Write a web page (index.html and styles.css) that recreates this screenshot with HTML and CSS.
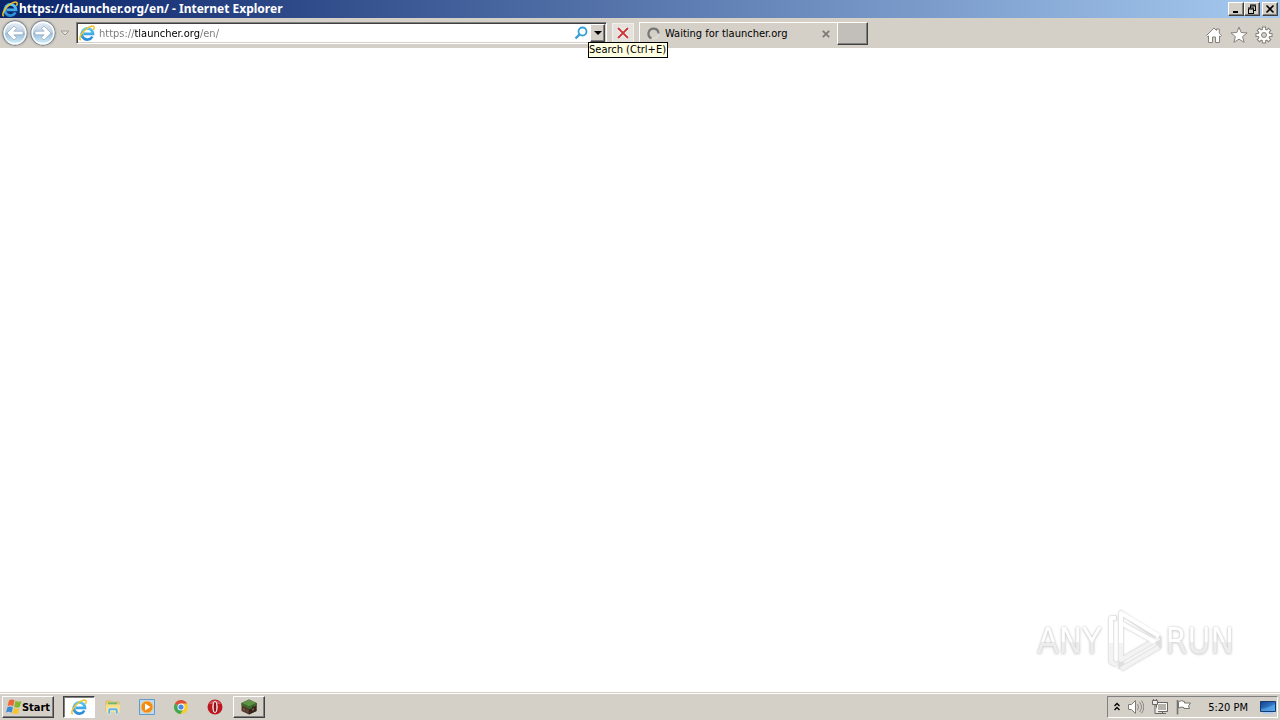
FILE: index.html
```html
<!DOCTYPE html>
<html lang="en">
<head>
<meta charset="utf-8">
<title>https://tlauncher.org/en/ - Internet Explorer</title>
<link rel="stylesheet" href="styles.css">
</head>
<body>
<svg class="defs" aria-hidden="true">
  <defs>
    <linearGradient id="blue" x1="0" y1="0" x2="0" y2="1"><stop offset="0" stop-color="#59c8f5"/><stop offset="1" stop-color="#2a8bd6"/></linearGradient>
    <linearGradient id="orb" x1="0" y1="0" x2="0" y2="1"><stop offset="0" stop-color="#eef3f8"/><stop offset=".48" stop-color="#bccfe2"/><stop offset=".52" stop-color="#9dbcd8"/><stop offset="1" stop-color="#d8f8ff"/></linearGradient>
    <linearGradient id="screen" x1="0" y1="0" x2="1" y2="1"><stop offset="0" stop-color="#123f8c"/><stop offset="1" stop-color="#4aa3ef"/></linearGradient>
    <symbol id="ie" viewBox="0 0 16 16">
      <path d="M13.400 11.500A5.600 5.600 0 1 1 14 8.900H4.500" fill="none" stroke="url(#blue)" stroke-width="2.700"/>
      <path d="M1.800 15.200C-.8 13.500 2.600 7.300 7.600 3.700c3.200-2.500 6.900-3.600 7.500-1.700.3.900-.1 1.900-.7 2.900" fill="none" stroke="#f3c322" stroke-width="1.500"/>
    </symbol>
    <symbol id="arrow" viewBox="0 0 26 26">
      <circle cx="13" cy="13" r="12.200" fill="url(#orb)" stroke="#8b8f96" stroke-width="1.400"/>
      <circle cx="13" cy="13" r="10.800" fill="none" stroke="#fff" stroke-opacity=".9" stroke-width="1.400"/>
      <path d="M5 13l7-7 2.500 2.500-2.700 2.700H21v3.600h-9.200l2.700 2.700L12 20z" fill="#fff" stroke="#8fa9c2" stroke-width=".7"/>
    </symbol>
  </defs>
</svg>

<header class="titlebar">
  <svg class="icon16"><use href="#ie"/></svg>
  <h1 class="title">https://tlauncher.org/en/ - Internet Explorer</h1>
  <div class="window-buttons">
    <button class="win" aria-label="Minimize"><svg viewBox="0 0 10 10"><path d="M2 8h5" stroke="#000" stroke-width="2"/></svg></button>
    <button class="win" aria-label="Restore"><svg viewBox="0 0 10 10"><path d="M3 1h6M3 2h6M3.500 2v2M8.500 2v4M7 6.500h2M1 4h6M1 5h6M1.500 5v4M6.500 5v4M1 9.500h6" stroke="#000" fill="none"/></svg></button>
    <button class="win close" aria-label="Close"><svg viewBox="0 0 10 10"><path d="M1.500 1.500l7 7M8.500 1.500l-7 7" stroke="#000" stroke-width="1.600"/></svg></button>
  </div>
</header>

<nav class="toolbar" aria-label="Browser">
  <div class="history">
    <button class="plain orb" aria-label="Back"><svg><use href="#arrow"/></svg></button>
    <button class="plain orb forward" aria-label="Forward"><svg><use href="#arrow"/></svg></button>
    <button class="plain recent" aria-label="Recent pages"><svg viewBox="0 0 10 6"><path d="M1 1h8L5 5z" fill="#e6e3dd" stroke="#a09c94"/></svg></button>
  </div>
  <form class="address">
    <svg class="icon16"><use href="#ie"/></svg>
    <input class="url" type="text" aria-label="Address" value="https://tlauncher.org/en/" spellcheck="false">
    <button type="button" class="plain search" aria-label="Search"><svg viewBox="0 0 14 14"><circle cx="8.500" cy="5.500" r="4" fill="#fff" stroke="#35a0d8" stroke-width="1.800"/><path d="M5.500 8.500L1.500 12.500" stroke="#35a0d8" stroke-width="2.400"/></svg></button>
    <button type="button" class="drop" aria-label="Show address list"><svg viewBox="0 0 8 4"><path d="M0 0h8L4 4z"/></svg></button>
    <div class="tooltip" role="tooltip">Search (Ctrl+E)</div>
  </form>
  <button class="stop" aria-label="Stop"><svg viewBox="0 0 12 12"><path d="M1 1l10 10M11 1L1 11" stroke="#fff" stroke-width="3.400"/><path d="M1 1l10 10M11 1L1 11" stroke="#c9383b" stroke-width="2"/></svg></button>
  <div class="tab">
    <svg class="spinner" viewBox="0 0 14 14"><circle cx="6.500" cy="6.500" r="5" fill="none" stroke="#dedbd5" stroke-width="2"/><path d="M4.500 11.200A5 5 0 1 1 11.500 6.500" fill="none" stroke="#777" stroke-width="2.200"/></svg>
    <span class="tab-title">Waiting for tlauncher.org</span>
    <button class="plain tab-close" aria-label="Close tab"><svg viewBox="0 0 8 8"><path d="M.8.800l6.400 6.400M7.200.8L.8 7.200" stroke="#7c7973" stroke-width="1.700"/></svg></button>
  </div>
  <button class="new-tab" aria-label="New tab"></button>
  <div class="tools">
    <button class="plain" aria-label="Home"><svg viewBox="0 0 18 18"><path d="M1.500 9.500L9 2l2.500 2.500V3h2.800v4.200l2.200 2.300-1.200 1.200-.8-.7v6.500h-4V11H7.500v5.500h-4V10l-.8.700z" fill="#fff" stroke="#85827c"/></svg></button>
    <button class="plain" aria-label="Favorites"><svg viewBox="0 0 18 18"><path d="M9 1.200l2.200 5.300 5.900.4-4.500 3.700 1.500 5.700L9 13.200l-5.100 3.100 1.500-5.700L.9 6.900l5.900-.4z" fill="#fff" stroke="#85827c"/></svg></button>
    <button class="plain" aria-label="Tools"><svg viewBox="0 0 18 18"><g stroke="#85827c" stroke-width="4.200"><path d="M9 .5v17M.5 9h17M3 3l12 12M15 3L3 15"/></g><circle cx="9" cy="9" r="6.400" fill="#85827c"/><g stroke="#fff" stroke-width="2.200"><path d="M9 1.500v15M1.500 9h15M3.700 3.700l10.600 10.600M14.300 3.700L3.700 14.300"/></g><circle cx="9" cy="9" r="5.400" fill="#fff"/><circle cx="9" cy="9" r="2.500" fill="#d4d0c8" stroke="#85827c"/></svg></button>
  </div>
</nav>

<main class="page">
  <div class="watermark">
    <span class="mark-text">ANY</span>
    <svg class="mark-logo" viewBox="0 0 60 64" fill="none" stroke-linejoin="round">
      <g stroke="#dedede" stroke-width="5"><path d="M13 9H7v44l6 3"/><path d="M17 4v47l38-22z"/><path d="M17 14l29 16M17 60l38-22v-8M17 51v9"/></g>
      <g stroke="#f3f3f3" stroke-width="4"><path d="M7 34v19l6 3M17 33v18l38-22M17 60l38-22"/></g>
      <g stroke="#fff" stroke-width="4"><path d="M12 9H7v25"/><path d="M17 34V4l38 23"/><path d="M17 14l34 19"/></g>
    </svg>
    <span class="mark-text">RUN</span>
  </div>
</main>

<footer class="taskbar">
  <button class="start"><svg class="icon16" viewBox="0 0 16 16"><path d="M3 1.500q3-2 5.500-.2L7.200 7.300Q4.500 5.600 1.600 7z" fill="#ed6435"/><path d="M9.500 1.800q2.500 1.700 6 .5l-1.900 5.800q-2.700 1.200-5.400-.4z" fill="#81b82b"/><path d="M1.400 8.200q2.900-1.300 5.500.3l-1.300 5.300Q3 12.100 0 13.500z" fill="#3b8bd4"/><path d="M7.900 8.900q2.700 1.600 5.400.4L12 14.500q-2.800 1.300-5.400-.3z" fill="#f7c42e"/></svg><span class="start-label">Start</span></button>
  <div class="tasks">
    <button class="task active" aria-label="Internet Explorer"><svg viewBox="0 0 16 16"><use href="#ie"/></svg></button>
    <button class="task" aria-label="Windows Explorer"><svg viewBox="0 0 16 16"><path d="M1 2h5l1 1h7v10H1z" fill="#edcb64" stroke="#d3ae4c" stroke-width=".6"/><path d="M3 3.500h9v2H3z" fill="#65b878"/><path d="M1 5.500h14v8H1z" fill="#f6df8c"/><path d="M3 15v-4q0-2 2-2h6q2 0 2 2v4h-2.500v-3.500h-5V15z" fill="#5bb0e0" stroke="#fff" stroke-width=".5"/></svg></button>
    <button class="task" aria-label="Media Player"><svg viewBox="0 0 16 16"><path d="M.5.500h15v15H.5z" fill="#b9dcf3" stroke="#609bd0"/><circle cx="8" cy="8" r="6" fill="#f28a13" stroke="#fbc16d"/><path d="M6 4.500v7L11.500 8z" fill="#fff"/></svg></button>
    <button class="task" aria-label="Chrome"><svg viewBox="0 0 16 16"><circle cx="8" cy="8" r="7" fill="#f9cb29"/><path d="M8 8L1.900 4.500A7 7 0 0 1 14.100 4.500H8z" fill="#df4b3c"/><path d="M8 8L1.900 4.500A7 7 0 0 0 7.500 15l3-5.300z" fill="#43a756"/><circle cx="8" cy="8" r="3.500" fill="#fff"/><circle cx="8" cy="8" r="2.600" fill="#4b89e8"/></svg></button>
    <button class="task" aria-label="Opera"><svg viewBox="0 0 16 16"><circle cx="8" cy="8" r="7.500" fill="#bd1820"/><path d="M2 5a7 7 0 0 1 12 0z" fill="#d5545a"/><ellipse cx="8" cy="8" rx="2.700" ry="6" fill="#f8eaea"/><ellipse cx="8" cy="8" rx="1.300" ry="5" fill="#8e1219"/></svg></button>
    <button class="task raised" aria-label="TLauncher"><svg viewBox="0 0 16 16"><path d="M8 .5l7.500 3.500v8L8 15.500.5 12V4z" fill="#51382a"/><path d="M8 7.500L15.500 4v8L8 15.500z" fill="#36251d"/><path d="M8 .5l7.500 3.500L8 7.500.5 4z" fill="#5e9345"/><path d="M.5 4L8 7.500 15.500 4v2L13 8V7l-2 1v1.500L8 10 5 8.500V8L3 7v1L.5 6z" fill="#3d6c2d"/><path d="M2 9l2 1v2l-2-1zM5 11l2 1v1l-2-1zM11 10l2-1v2l-2 1z" fill="#765641"/></svg></button>
  </div>
  <div class="tray">
    <button class="plain expand" aria-label="Show hidden icons"><svg viewBox="0 0 6 9"><path d="M.5 4L3 1.500 5.500 4M.5 8L3 5.500 5.500 8" fill="none" stroke="#000" stroke-width="1.400"/></svg></button>
    <button class="plain" aria-label="Volume"><svg viewBox="0 0 16 16"><path d="M.5 5.500h3l4-4v13l-4-4h-3z" fill="#fff" stroke="#7f7c77"/><path d="M9.500 5q2 3 0 6M11.500 3q4 5 0 10M13.500 1.500q4.500 6.500 0 13" fill="none" stroke="#8d8a84"/></svg></button>
    <button class="plain" aria-label="Network"><svg viewBox="0 0 16 16"><path d="M4.500 3.500h11v9h-11z" fill="#b6b3ad" stroke="#686560"/><path d="M5.500 4.500h9v7h-9z" fill="none" stroke="#fff"/><path d="M7 14.500h7M10.500 12.500v2" stroke="#686560"/><path d="M.5 1.500h5v4h-5zM3 5.500v9h4" fill="#eee" stroke="#686560"/><path d="M1.500 0v2M4.500 0v2" stroke="#686560"/></svg></button>
    <button class="plain" aria-label="Action Center"><svg viewBox="0 0 16 16"><path d="M1.500 1v14.500" stroke="#77746f" stroke-width="1.600"/><path d="M2.500 2.500q3-1.500 6 0v1.500h6l-2 3 1 2.500H8V8.500q-3-1-5.500.5z" fill="#fff" stroke="#77746f"/></svg></button>
    <time class="clock">5:20 PM</time>
    <button class="plain desktop" aria-label="Show desktop"><svg viewBox="0 0 16 16"><path d="M.5 2.500h15v10H.5z" fill="url(#screen)" stroke="#173a70"/><path d="M1 10q7-1 14-5v7H1z" fill="#66b8f5" opacity=".5"/><path d="M3 14h10" stroke="#adcaf0" stroke-width="2"/></svg></button>
  </div>
</footer>
</body>
</html>
```
FILE: styles.css
```css
* { box-sizing: border-box; }

body {
  display: flex;
  flex-direction: column;
  min-height: 100vh;
  margin: 0;
  background: #fff;
  color: #000;
  font: 11px/14px Tahoma, "DejaVu Sans Condensed", "DejaVu Sans", sans-serif;
}

button, input { font: inherit; color: inherit; }
button { display: flex; align-items: center; justify-content: center; padding: 0; }
svg { display: block; flex: none; }
.defs { position: absolute; width: 0; height: 0; }
.icon16 { width: 16px; height: 16px; }
.plain { border: 0; background: none; }
.plain svg { width: 16px; height: 16px; }

.titlebar {
  display: flex;
  align-items: center;
  height: 18px;
  padding: 0 2px;
  background: linear-gradient(90deg, #0a246a, #a6caf0);
  color: #fff;
}
.title { flex: 1; margin: 0 0 0 1px; font: bold 12px/16px Tahoma, "Noto Sans", sans-serif; white-space: nowrap; }
.window-buttons { display: flex; }
.win {
  width: 16px;
  height: 14px;
  border: 1px solid;
  border-color: #fff #404040 #404040 #fff;
  background: #d4d0c8;
  box-shadow: inset -1px -1px #808080;
}
.win svg { width: 10px; height: 10px; }
.close { margin-left: 2px; }

.toolbar {
  display: flex;
  height: 30px;
  padding: 0 7px 0 2px;
  background: #d4d0c8;
}
.history { display: flex; align-items: center; width: 74px; }
.orb svg { width: 26px; height: 26px; border-radius: 50%; box-shadow: 0 0 2px #a09c94; }
.orb + .orb { margin-left: 2px; }
.forward svg { transform: scaleX(-1); }
.recent { margin-left: 4px; }
.recent svg { width: 10px; height: 6px; }

.address {
  position: relative;
  display: flex;
  align-items: center;
  width: 531px;
  height: 22px;
  margin-top: 4px;
  padding: 0 1px 0 2px;
  border: 1px solid;
  border-color: #808080 #fff #fff #808080;
  background: #fff;
  box-shadow: inset 1px 1px #404040, inset -1px -1px #d4d0c8;
}
.url {
  flex: 1;
  min-width: 0;
  margin-left: 4px;
  padding: 2px 0 0;
  border: 0;
  outline: 0;
  background: linear-gradient(90deg, #777 36px, #000 36px, #000 101px, #777 101px);
  background-clip: text;
  -webkit-background-clip: text;
  -webkit-text-fill-color: transparent;
}
.search { width: 16px; margin-right: 1px; }
.search svg { width: 14px; height: 14px; }
.drop {
  width: 15px;
  height: 18px;
  border: 1px solid;
  border-color: #fff #404040 #404040 #fff;
  background: #d4d0c8;
  box-shadow: inset -1px -1px #808080;
}
.drop svg { width: 8px; height: 4px; }
.tooltip {
  position: absolute;
  top: 19px;
  left: 511px;
  z-index: 1;
  padding: 0 1px 0 0;
  border: 1px solid #000;
  background: #ffffe1;
  white-space: nowrap;
}
.stop {
  width: 22px;
  height: 20px;
  margin: 5px 5px 0;
  border: 1px solid #f2f0ed;
  background: #e5e2de;
}
.stop svg { width: 12px; height: 12px; }
.tab {
  display: flex;
  align-items: center;
  width: 198px;
  height: 24px;
  margin-top: 4px;
  padding: 0 7px 1px;
  border-top: 1px solid #fff;
  border-left: 1px solid #fff;
}
.spinner { width: 14px; height: 14px; }
.tab-title { flex: 1; margin-left: 4px; white-space: nowrap; }
.tab-close svg { width: 8px; height: 8px; }
.new-tab {
  width: 31px;
  height: 23px;
  margin-top: 4px;
  border: 1px solid;
  border-color: #fff #404040 #404040 #fff;
  background: #c2beba;
  box-shadow: inset -1px -1px #808080;
}
.tools { display: flex; align-items: center; gap: 7px; margin-left: auto; padding-top: 4px; }
.tools svg { width: 18px; height: 18px; }

.page {
  display: flex;
  flex: 1;
  align-items: flex-end;
  justify-content: flex-end;
  padding: 0 46px 19px 0;
}
.watermark { display: flex; align-items: center; }
.mark-text {
  background: linear-gradient(#fff 52%, #ededed 52%);
  background-clip: text;
  -webkit-background-clip: text;
  color: transparent;
  font: 35px/44px "DejaVu Sans Condensed", "DejaVu Sans", sans-serif;
  filter: drop-shadow(0 0 1px #c8c8c8) drop-shadow(0 1px 1px #e0e0e0);
}
.mark-logo { width: 60px; height: 64px; margin: 0 2px; filter: drop-shadow(0 0 1px #ddd); }

.taskbar {
  display: flex;
  align-items: center;
  height: 28px;
  padding: 1px 2px;
  border-top: 1px solid #d4d0c8;
  background: #d4d0c8;
  box-shadow: inset 0 1px #fff;
}
.start, .raised {
  border: 1px solid;
  border-color: #fff #404040 #404040 #fff;
  background: #d4d0c8;
  box-shadow: inset -1px -1px #808080;
}
.start { width: 52px; height: 22px; font-weight: bold; }
.start-label, .clock { padding-top: 2px; }
.tasks { display: flex; gap: 2px; margin-left: 9px; }
.task { width: 32px; height: 22px; border: 1px solid transparent; background: none; }
.task svg { width: 16px; height: 16px; }
.task.active {
  border-color: #404040 #fff #fff #404040;
  background: #fff;
  box-shadow: inset 1px 1px #808080;
}
.task.raised { border-color: #fff #404040 #404040 #fff; background: #d4d0c8; }
.tray {
  display: flex;
  align-items: center;
  gap: 8px;
  height: 22px;
  margin-left: auto;
  padding: 0 1px 0 6px;
  border: 1px solid;
  border-color: #808080 #fff #fff #808080;
}
.expand svg { width: 6px; height: 9px; }
.clock { margin: 0 4px 0 8px; white-space: nowrap; }
```
